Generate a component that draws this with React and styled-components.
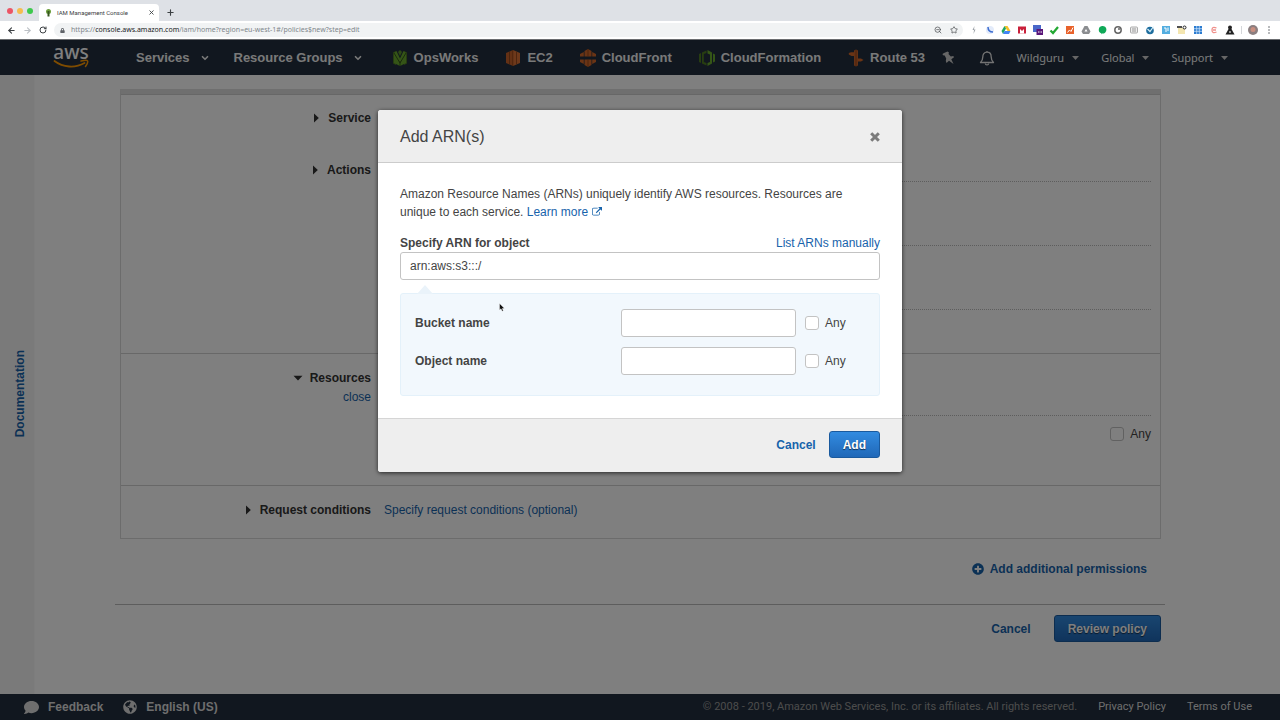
import React from "react";
import styled, { createGlobalStyle, css } from "styled-components";
import { FaPlusCircle, FaComment, FaGlobeAmericas, FaLock } from "react-icons/fa";
import { ArrowLeft, ArrowRight, RotateCw, Plus, X, ZoomOut, Star, ChevronDown } from "lucide-react";

const GlobalStyle = createGlobalStyle`
  * { box-sizing: border-box; }
  body {
    margin: 0;
    background: #fff;
    font-family: "Liberation Sans", Arial, sans-serif;
    font-size: 12px;
    line-height: 18px;
    color: #444;
  }
  button, input { font: inherit; }
  svg { flex: none; display: block; }
`;

const Window = styled.div`
  min-height: 100vh;
  display: flex;
  flex-direction: column;
`;

/* ---------- browser chrome ---------- */

const TabStrip = styled.div`
  display: flex;
  align-items: flex-end;
  height: 21px;
  padding-left: 7px;
  background: #dee1e6;
  font: 6px/12px Roboto, sans-serif;
  color: #3c4043;
`;

const Lights = styled.div`
  display: flex;
  gap: 4px;
  height: 21px;
  align-items: center;
  margin-right: 6px;
`;

const Light = styled.span`
  width: 6px;
  height: 6px;
  border-radius: 50%;
  background: ${(p) => p.$color};
`;

const Tab = styled.div`
  display: flex;
  align-items: center;
  gap: 5px;
  width: 120px;
  height: 17px;
  padding: 0 3px 0 6px;
  border-radius: 4px 4px 0 0;
  background: #fff;
  white-space: nowrap;
`;

const ChromeButton = styled.button`
  display: flex;
  align-items: center;
  justify-content: center;
  width: 10px;
  height: ${(p) => p.$height || 10}px;
  padding: 0;
  border: 0;
  background: none;
  color: ${(p) => p.$color || "#3c4043"};
  margin-left: ${(p) => (p.$push ? "auto" : "0")};
`;

const NewTab = styled(ChromeButton)`
  margin-left: 6px;
`;

const Toolbar = styled.div`
  display: flex;
  align-items: center;
  gap: 6px;
  height: 18px;
  padding: 0 6px;
  background: #fff;
`;

const Omnibox = styled.div`
  flex: 1;
  display: flex;
  align-items: center;
  gap: 6px;
  height: 14px;
  padding: 0 4px 0 6px;
  border-radius: 7px;
  background: #f1f3f4;
  font: 7px/14px "Noto Sans", sans-serif;
  color: #80868b;
  white-space: nowrap;
  b { font-weight: 400; color: #202124; }
`;

const Address = styled.span`
  flex: 1;
`;

const Extensions = styled.div`
  display: flex;
  align-items: center;
  gap: 6px;
`;

const Divider = styled.span`
  width: 1px;
  height: 8px;
  background: #d5d7da;
`;

/* ---------- console ---------- */

const Console = styled.div`
  position: relative;
  flex: 1;
  display: flex;
  flex-direction: column;
  border-top: 1px solid #6b6d70;
`;

const NavBar = styled.nav`
  display: flex;
  align-items: center;
  height: 35px;
  padding: 0 52px 0 53px;
  background: #232f3e;
  color: #f2f3f3;
  font-size: 13px;
  font-weight: 700;
  white-space: nowrap;
`;

const Logo = styled.a`
  display: flex;
  flex-direction: column;
  align-items: center;
  width: 36px;
  margin-right: 47px;
  font: 500 19px/13px "Noto Sans", sans-serif;
  color: #fff;
  text-decoration: none;
`;

const NavMenu = styled.button`
  display: flex;
  align-items: center;
  gap: ${(p) => (p.$small ? 8 : 10)}px;
  padding: 0;
  border: 0;
  background: none;
  color: inherit;
  font: ${(p) => (p.$small ? '11px/16px "Noto Sans", sans-serif' : "inherit")};
`;

const NavMenus = styled.div`
  display: flex;
  gap: 24px;
`;

const Shortcuts = styled.div`
  display: flex;
  gap: 27px;
  margin-left: 29px;
`;

const Shortcut = styled.a`
  display: flex;
  align-items: center;
  gap: 6px;
  color: inherit;
  text-decoration: none;
`;

const NavTools = styled.div`
  display: flex;
  align-items: center;
  gap: 22px;
  margin-left: auto;
`;

const Body = styled.div`
  flex: 1;
  display: flex;
  background: #fff;
`;

const DocsTab = styled.aside`
  display: flex;
  align-items: center;
  justify-content: center;
  width: 35px;
  padding: 18px 0 0 5px;
  background: #f5f5f5;
  border-right: 1px solid #fafafa;
`;

const link = css`
  color: #1763ab;
  text-decoration: none;
`;

const DocsLink = styled.a`
  ${link}
  writing-mode: vertical-rl;
  transform: rotate(180deg);
  font-weight: 700;
`;

const Link = styled.a`
  ${link}
`;

const Main = styled.main`
  flex: 1;
  padding: 14px 115px 40px 80px;
`;

const Card = styled.div`
  margin: 0 4px 0 5px;
  border: 1px solid #d8d8d8;
  border-top: 5px solid #dedede;
  box-shadow: inset 0 1px #cfcfcf;
`;

const Section = styled.section`
  display: grid;
  grid-template-columns: 250px 1fr;
  column-gap: 13px;
  min-height: ${(p) => p.$height}px;
  padding-right: 9px;
  border-bottom: ${(p) => (p.$line ? "1px solid #d0d0d0" : "0")};
`;

const SectionHead = styled.div`
  display: flex;
  flex-direction: column;
  align-items: flex-end;
  padding-top: 15px;
  gap: 1px;
`;

const SectionToggle = styled.button`
  display: flex;
  align-items: center;
  gap: 7px;
  padding: 0;
  border: 0;
  background: none;
  color: #333;
  font-weight: 700;
`;

const SectionBody = styled.div`
  padding-top: ${(p) => p.$top || 15}px;
`;

const Group = styled.div`
  display: flex;
  justify-content: flex-end;
  min-height: ${(p) => p.$height || 64}px;
  padding-top: 9px;
  border-top: 1px dotted #bbb;
`;

const Check = styled.label`
  display: flex;
  align-items: center;
  align-self: flex-start;
  gap: 6px;
`;

const CheckBox = styled.input.attrs({ type: "checkbox" })`
  appearance: none;
  width: 14px;
  height: 14px;
  margin: 0;
  border: 1px solid #c3c3c3;
  border-radius: 3px;
  background: #fff;
`;

const AddMore = styled.div`
  display: flex;
  justify-content: flex-end;
  padding: 21px 18px 26px;
  border-bottom: 1px solid #bbb;
`;

const IconLink = styled.a`
  ${link}
  display: flex;
  align-items: center;
  gap: 6px;
  font-weight: 700;
`;

const Actions = styled.div`
  display: flex;
  align-items: center;
  justify-content: flex-end;
  gap: ${(p) => p.$gap}px;
`;

const PageActions = styled(Actions)`
  padding: 10px 4px 0;
`;

const TextButton = styled.button`
  padding: 0;
  border: 0;
  background: none;
  color: #1763ab;
  font-weight: 700;
`;

const PrimaryButton = styled.button`
  height: 27px;
  padding: 0 13px;
  border: 1px solid #1a5a9e;
  border-radius: 3px;
  background: linear-gradient(#328be0, #2068b8);
  color: #fff;
  font-weight: 700;
  text-shadow: 0 1px 1px rgba(0, 0, 0, 0.6);
`;

const FooterBar = styled.footer`
  display: flex;
  align-items: center;
  height: 26px;
  padding: 0 28px 0 24px;
  background: #232f3e;
  color: #dcdcdc;
`;

const FooterLink = styled.a`
  display: flex;
  align-items: center;
  gap: 9px;
  margin-right: 20px;
  color: inherit;
  font-weight: 700;
  text-decoration: none;
`;

const Legal = styled.div`
  display: flex;
  gap: 21px;
  margin-left: auto;
  font-family: Roboto, sans-serif;
  font-size: 11px;
  color: #999;
  a { color: #dcdcdc; text-decoration: none; }
`;

/* ---------- dialog ---------- */

const Backdrop = styled.div`
  position: absolute;
  inset: 0;
  display: flex;
  align-items: flex-start;
  justify-content: center;
  padding-top: 70px;
  background: rgba(0, 0, 0, 0.5);
`;

const Dialog = styled.div`
  position: relative;
  width: 524px;
  border-radius: 3px;
  background: #fff;
  box-shadow: 0 1px 4px rgba(0, 0, 0, 0.7);
  overflow: hidden;
`;

const DialogHead = styled.header`
  display: flex;
  align-items: center;
  justify-content: space-between;
  height: 53px;
  padding: 2px 22px 0;
  border-bottom: 1px solid #ccc;
  background: #eee;
`;

const Title = styled.h1`
  margin: 0;
  font-size: 16px;
  font-weight: 400;
`;

const CloseButton = styled.button`
  padding: 0;
  border: 0;
  background: none;
  color: #7b7b7b;
`;

const DialogBody = styled.div`
  padding: 22px;
`;

const Intro = styled.p`
  margin: 0 0 14px;
  svg { display: inline-block; vertical-align: -1px; margin-left: 4px; }
`;

const FieldHead = styled.div`
  display: flex;
  justify-content: space-between;
  line-height: 17px;
  label { font-weight: 700; }
`;

const TextInput = styled.input`
  width: 100%;
  height: 28px;
  padding: 0 9px;
  border: 1px solid #c3c3c3;
  border-radius: 3px;
  background: #fff;
  color: #444;
`;

const Parts = styled.div`
  position: relative;
  display: grid;
  gap: 10px;
  margin-top: 13px;
  padding: 15px 14px 20px;
  border: 1px solid #e4f1fa;
  border-radius: 3px;
  background: #f2f8fd;
  &::before {
    content: "";
    position: absolute;
    left: 16px;
    top: -9px;
    border: 8px solid transparent;
    border-top: 0;
    border-bottom: 9px solid #eaf3fa;
  }
`;

const PartRow = styled.div`
  display: grid;
  grid-template-columns: 1fr 175px 60px;
  align-items: center;
  column-gap: 9px;
  > label:first-child { font-weight: 700; }
  > label:last-child { align-self: center; }
`;

const DialogFoot = styled(Actions)`
  height: 54px;
  padding: 0 22px 2px;
  border-top: 1px solid #d5d5d5;
  background: #eee;
`;

const Pointer = styled.svg`
  position: absolute;
  left: 121px;
  top: 193px;
`;

/* ---------- drawings ---------- */

const Caret = ({ open }) => (
  <svg width="10" height="10" viewBox="0 0 10 10" fill="currentColor">
    <path d={open ? "M.5 2.800H9.500L5 7.400Z" : "M3 .5L7.800 5L3 9.500Z"} />
  </svg>
);

const DownCaret = () => (
  <svg width="7" height="4" viewBox="0 0 7 4" fill="#ccc"><path d="M0 0H7L3.500 4Z" /></svg>
);

const Smile = () => (
  <svg width="36" height="10" viewBox="0 0 36 10" fill="none" stroke="#f90" strokeWidth="1.800" strokeLinecap="round">
    <path d="M1.500 2C10 8.500 22 9.500 31.500 4" />
    <path d="M28 2C31 1.300 34 1 34.500 1.800S34 5.500 32.500 7.500" strokeWidth="1.500" />
  </svg>
);

const External = () => (
  <svg width="10" height="10" viewBox="0 0 1792 1792" fill="currentColor">
    <path d="M1408 928v320q0 119-84.500 203.500t-203.500 84.500h-832q-119 0-203.500-84.500t-84.500-203.500v-832q0-119 84.500-203.500t203.500-84.500h704q14 0 23 9t9 23v64q0 14-9 23t-23 9h-704q-66 0-113 47t-47 113v832q0 66 47 113t113 47h832q66 0 113-47t47-113v-320q0-14 9-23t23-9h64q14 0 23 9t9 23zm384-864v512q0 26-19 45t-45 19-45-19l-176-176-652 652q-10 10-23 10t-23-10l-114-114q-10-10-10-23t10-23l652-652-176-176q-19-19-19-45t19-45 45-19h512q26 0 45 19t19 45z" />
  </svg>
);

const OpsWorks = () => (
  <svg width="16" height="18" viewBox="0 0 16 18">
    <path d="M1 3.500L4 2V16L1 14.500Z" fill="#4f7a22" />
    <path d="M15 3.500L12 2V16L15 14.500Z" fill="#4f7a22" />
    <path d="M4.500 2L8 9.500L11.500 2L14 4V14L8 17L2 14V4Z" fill="#6aaa2e" />
    <path d="M2 4L8 14L14 4M8 12V17" fill="none" stroke="#34571a" />
    <path d="M6 3L8 1L10 3L8 7Z" fill="#5b932a" />
  </svg>
);

const Ec2 = () => (
  <svg width="16" height="18" viewBox="0 0 16 18">
    <path d="M1 4L8 1V17L1 14Z" fill="#c9622a" />
    <path d="M15 4L8 1V17L15 14Z" fill="#dc7336" />
    <path d="M4.500 3V15M7.800 1V17M11.500 3V15" stroke="#8a4118" strokeWidth=".8" />
  </svg>
);

const CloudFront = () => (
  <svg width="16" height="18" viewBox="0 0 16 18">
    <g fill="#d4682a">
      <path d="M4.500 2L8 0L11.500 2V7.500H4.500Z" />
      <path d="M4.500 16L8 18L11.500 16V10.500H4.500Z" />
      <path d="M0 5L3.800 3V7.500H0ZM16 5L12.200 3V7.500H16Z" />
      <path d="M0 13L3.800 15V10.500H0ZM16 13L12.200 15V10.500H16Z" />
    </g>
    <path d="M8 0V7.500M8 10.500V18" stroke="#8a4118" strokeWidth=".8" />
  </svg>
);

const CloudFormation = () => (
  <svg width="16" height="18" viewBox="0 0 16 18">
    <path d="M0 5L2 4V14L0 13ZM3 3.500L7.500 1.500V4L4.800 5V13L7.500 14V16.500L3 14.500Z" fill="#4f7a22" />
    <path d="M8.500 1L13 3.500V14.500L8.500 17V14L11 13V5.500L8.500 4.500ZM14 4.500L16 5.500V12.500L14 13.500Z" fill="#6aaa2e" />
  </svg>
);

const Route53 = () => (
  <svg width="16" height="18" viewBox="0 0 16 18">
    <path d="M6 1.500L8 .5L10 1.500V16.500L8 17.500L6 16.500Z" fill="#c9622a" />
    <path d="M6 7H3.500L.8 5.500V4L3 3.200H6ZM10 9.500H13L15.500 11L13 12.500H10Z" fill="#d4682a" />
    <path d="M8 1V17" stroke="#8a4118" strokeWidth=".8" />
  </svg>
);

const Pin = () => (
  <svg width="16" height="14" viewBox="0 0 16 14" fill="#ccc">
    <path d="M3 2L6.500 .5L8 1.500L7.500 3L9.800 5.500L12.300 5L13 6.300L10.300 8.200L12.500 13L8 9.800L5.500 12L4.800 10L5.200 7.500L3.700 4.500L2 4.200L1.500 3Z" />
  </svg>
);

const BellIcon = () => (
  <svg width="16" height="16" viewBox="0 0 16 16" fill="none" stroke="#e6e6e6" strokeWidth="1.300" strokeLinejoin="round">
    <path d="M8 1V2.200M8 2.200C5 2.200 3.800 4.500 3.800 7C3.800 9.800 3 11 1.500 12.500H14.500C13 11 12.200 9.800 12.200 7C12.200 4.500 11 2.200 8 2.200Z" />
    <path d="M6.300 13.500C6.500 15.400 9.500 15.400 9.700 13.500" />
  </svg>
);

const Favicon = () => (
  <svg width="7" height="8" viewBox="0 0 7 8">
    <circle cx="3.500" cy="2.500" r="2.500" fill="#6b9e3c" />
    <path d="M2.500 2H4.500V7.500H2.500Z" fill="#36571f" />
  </svg>
);

const extensionArt = [
  <path d="M5.500 1L3.500 5H5L4.500 9L6.500 4.500H5Z" fill="#9aa0a6" />,
  <><circle cx="5" cy="5" r="4" fill="#e3ebfa" /><path d="M3 2Q3 7 8 7" stroke="#3d6dd0" strokeWidth="1.500" fill="none" /></>,
  <><path d="M3.500 1H6.500L9.500 6H6.500Z" fill="#f6c026" /><path d="M3.500 1L5 3.500L2 9L.5 6Z" fill="#1fa463" /><path d="M3.500 6H9.500L8 9H2Z" fill="#4285f4" /></>,
  <><path d="M1 1.500H9V8.500H1Z" fill="#c9203b" /><path d="M3 4V8.500H7V4L5 6Z" fill="#fff" /></>,
  <><path d="M0 0H8V7H0Z" fill="#4a67c9" /><path d="M3.500 4H10.500V10H3.500Z" fill="#5a1679" /><path d="M5 7H9" stroke="#fff" strokeDasharray="1.500 1" /></>,
  <path d="M1.500 5.500L4 8L9 2" stroke="#22a832" strokeWidth="2.200" fill="none" />,
  <><path d="M1 1H9V9H1Z" fill="#e8622b" /><path d="M2.500 7.500L4.500 5L6 6.500L8 2.500" stroke="#fff" fill="none" /></>,
  <><path d="M3.500 1H6.500L9.500 6.500L8 9H2L.5 6.500Z" fill="#8b8d90" /><path d="M5 4L6.500 6.500H3.500Z" fill="#fff" /></>,
  <path d="M5 1A3.800 3.800 0 1 1 5 8.500L4.500 9.500V8.400A3.800 3.800 0 0 1 5 1Z" fill="#0fa958" />,
  <><circle cx="5" cy="5" r="3.200" stroke="#666" strokeWidth="1.500" fill="#fff" /><circle cx="6" cy="4" r="1" fill="#666" /></>,
  <><rect x="1.500" y="2" width="7" height="6" rx="1" stroke="#aaa" fill="#eee" /><path d="M3 4H7M3 6H7" stroke="#999" /></>,
  <><circle cx="5" cy="5.500" r="3.800" fill="#1d6d9e" /><path d="M2.500 4L5 6.500L8.500 1.500" stroke="#d9f0fb" strokeWidth="1.200" fill="none" /></>,
  <><path d="M1 1H9V9H1Z" fill="#54aee0" /><path d="M3 3H5V7M7 2.500V6" stroke="#fff" fill="none" /></>,
  <><path d="M1 3H8V9H1Z" fill="#f4e6b0" /><path d="M0 2H5" stroke="#222" strokeWidth="1.600" /><circle cx="7.500" cy="2.500" r="1.500" stroke="#222" fill="#fff" /></>,
  <><path d="M1 1H9V9H1Z" fill="#2a7bd0" /><path d="M1 3.700H9M1 6.300H9M3.700 1V9M6.300 1V9" stroke="#d7e9fa" strokeWidth=".7" /></>,
  <path d="M7.500 3Q3 1 3 5T7.500 7M4 5H7" stroke="#ef8f8a" strokeWidth="1.300" fill="none" />,
  <><circle cx="5" cy="2.500" r="2" fill="#222" /><path d="M3.500 4H6.500L9.500 9.500H.5Z" fill="#222" /><path d="M4 7H6" stroke="#fff" /></>,
];

const shortcuts = [
  ["OpsWorks", OpsWorks],
  ["EC2", Ec2],
  ["CloudFront", CloudFront],
  ["CloudFormation", CloudFormation],
  ["Route 53", Route53],
];

function Browser() {
  return (
    <>
      <TabStrip>
        <Lights><Light $color="#ec5565" /><Light $color="#f5bd4f" /><Light $color="#3ec94d" /></Lights>
        <Tab>
          <Favicon />
          <span>IAM Management Console</span>
          <ChromeButton $push aria-label="Close tab"><X size={7} strokeWidth={3} /></ChromeButton>
        </Tab>
        <NewTab $height={17} aria-label="New tab"><Plus size={9} strokeWidth={3} /></NewTab>
      </TabStrip>
      <Toolbar>
        <ChromeButton aria-label="Back"><ArrowLeft size={9} strokeWidth={3} /></ChromeButton>
        <ChromeButton $color="#bdc1c6" aria-label="Forward"><ArrowRight size={9} strokeWidth={3} /></ChromeButton>
        <ChromeButton aria-label="Reload"><RotateCw size={8} strokeWidth={3} /></ChromeButton>
        <Omnibox>
          <FaLock size={5} color="#5f6368" />
          <Address>https://<b>console.aws.amazon.com</b>/iam/home?region=eu-west-1#/policies$new?step=edit</Address>
          <ChromeButton aria-label="Zoom"><ZoomOut size={8} strokeWidth={2} /></ChromeButton>
          <ChromeButton aria-label="Bookmark"><Star size={8} strokeWidth={2} /></ChromeButton>
        </Omnibox>
        <Extensions>
          {extensionArt.map((art, i) => (
            <svg key={i} width="10" height="10" viewBox="0 0 10 10" fill="none">{art}</svg>
          ))}
          <Divider />
          <svg width="10" height="10" viewBox="0 0 10 10">
            <circle cx="5" cy="5" r="5" fill="#8b7f80" />
            <circle cx="5" cy="4.500" r="2.500" fill="#c98f80" />
          </svg>
          <svg width="10" height="10" viewBox="0 0 10 10" fill="#5f6368">
            <circle cx="5" cy="2" r=".8" /><circle cx="5" cy="5" r=".8" /><circle cx="5" cy="8" r=".8" />
          </svg>
        </Extensions>
      </Toolbar>
    </>
  );
}

function Navigation() {
  return (
    <NavBar>
      <Logo href="#home">aws<Smile /></Logo>
      <NavMenus>
        <NavMenu>Services<ChevronDown size={10} strokeWidth={4} /></NavMenu>
        <NavMenu>Resource Groups<ChevronDown size={10} strokeWidth={4} /></NavMenu>
      </NavMenus>
      <Shortcuts>
        {shortcuts.map(([name, Icon]) => (
          <Shortcut key={name} href="#shortcut"><Icon />{name}</Shortcut>
        ))}
      </Shortcuts>
      <NavTools>
        <Pin />
        <BellIcon />
        <NavMenu $small>Wildguru<DownCaret /></NavMenu>
        <NavMenu $small>Global<DownCaret /></NavMenu>
        <NavMenu $small>Support<DownCaret /></NavMenu>
      </NavTools>
    </NavBar>
  );
}

function PolicyEditor() {
  return (
    <Main>
      <Card>
        <Section $height={52}>
          <SectionHead><SectionToggle><Caret />Service</SectionToggle></SectionHead>
        </Section>
        <Section $height={208} $line>
          <SectionHead><SectionToggle><Caret />Actions</SectionToggle></SectionHead>
          <SectionBody $top={35}><Group /><Group /><Group $height={44} /></SectionBody>
        </Section>
        <Section $height={132} $line>
          <SectionHead>
            <SectionToggle><Caret open />Resources</SectionToggle>
            <Link href="#close">close</Link>
          </SectionHead>
          <SectionBody $top={61}>
            <Group><Check><CheckBox />Any</Check></Group>
          </SectionBody>
        </Section>
        <Section $height={52}>
          <SectionHead><SectionToggle><Caret />Request conditions</SectionToggle></SectionHead>
          <SectionBody><Link href="#conditions">Specify request conditions (optional)</Link></SectionBody>
        </Section>
      </Card>
      <AddMore><IconLink href="#add"><FaPlusCircle size={12} />Add additional permissions</IconLink></AddMore>
      <PageActions $gap={23}>
        <TextButton>Cancel</TextButton>
        <PrimaryButton>Review policy</PrimaryButton>
      </PageActions>
    </Main>
  );
}

function PartField({ id, label }) {
  return (
    <PartRow>
      <label htmlFor={id}>{label}</label>
      <TextInput id={id} />
      <Check><CheckBox />Any</Check>
    </PartRow>
  );
}

function ArnDialog() {
  return (
    <Backdrop>
      <Dialog role="dialog" aria-labelledby="arn-title">
        <DialogHead>
          <Title id="arn-title">Add ARN(s)</Title>
          <CloseButton aria-label="Close">
            <svg width="10" height="10" viewBox="0 0 10 10" stroke="currentColor" strokeWidth="3">
              <path d="M1.200 1.200L8.800 8.800M8.800 1.200L1.200 8.800" />
            </svg>
          </CloseButton>
        </DialogHead>
        <DialogBody>
          <Intro>
            Amazon Resource Names (ARNs) uniquely identify AWS resources. Resources are{" "}
            <br />
            unique to each service. <Link href="#learn">Learn more<External /></Link>
          </Intro>
          <FieldHead>
            <label htmlFor="arn">Specify ARN for object</label>
            <Link href="#list">List ARNs manually</Link>
          </FieldHead>
          <TextInput id="arn" defaultValue="arn:aws:s3:::/" />
          <Parts>
            <PartField id="bucket" label="Bucket name" />
            <PartField id="object" label="Object name" />
          </Parts>
        </DialogBody>
        <DialogFoot $gap={13}>
          <TextButton>Cancel</TextButton>
          <PrimaryButton>Add</PrimaryButton>
        </DialogFoot>
        <Pointer width="6" height="9" viewBox="0 0 6 9">
          <path d="M.5 .5V7L2 5.800L3.200 8.300L4.300 7.800L3.300 5.400L5.300 5.200Z" fill="#111" stroke="#fff" strokeWidth=".4" />
        </Pointer>
      </Dialog>
    </Backdrop>
  );
}

export default function App() {
  return (
    <Window>
      <GlobalStyle />
      <Browser />
      <Console>
        <Navigation />
        <Body>
          <DocsTab><DocsLink href="#docs">Documentation</DocsLink></DocsTab>
          <PolicyEditor />
        </Body>
        <FooterBar>
          <FooterLink href="#feedback"><FaComment size={15} />Feedback</FooterLink>
          <FooterLink href="#language"><FaGlobeAmericas size={14} />English (US)</FooterLink>
          <Legal>
            <span>© 2008 - 2019, Amazon Web Services, Inc. or its affiliates. All rights reserved.</span>
            <a href="#privacy">Privacy Policy</a>
            <a href="#terms">Terms of Use</a>
          </Legal>
        </FooterBar>
        <ArnDialog />
      </Console>
    </Window>
  );
}
